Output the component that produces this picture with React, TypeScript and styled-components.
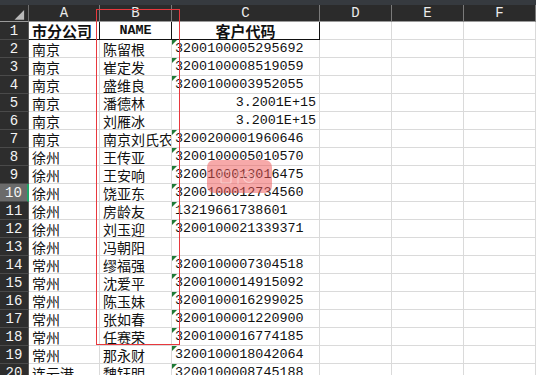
import styled, { createGlobalStyle } from 'styled-components'

const GlobalStyle = createGlobalStyle`
    html, body {
        margin: 0;
        padding: 0;
        background: #ffffff;
        overflow: hidden;
    }
`

type Row = { city: string; name: string; code: string; sci?: boolean }

const rows: Row[] = [
    { city: '南京', name: '陈留根', code: '3200100005295692' },
    { city: '南京', name: '崔定发', code: '3200100008519059' },
    { city: '南京', name: '盛维良', code: '3200100003952055' },
    { city: '南京', name: '潘德林', code: '3.2001E+15', sci: true },
    { city: '南京', name: '刘雁冰', code: '3.2001E+15', sci: true },
    { city: '南京', name: '南京刘氏农', code: '3200200001960646' },
    { city: '徐州', name: '王传亚', code: '3200100005010570' },
    { city: '徐州', name: '王安响', code: '3200100013016475' },
    { city: '徐州', name: '饶亚东', code: '3200100012734560' },
    { city: '徐州', name: '房龄友', code: '13219661738601' },
    { city: '徐州', name: '刘玉迎', code: '3200100021339371' },
    { city: '徐州', name: '冯朝阳', code: '' },
    { city: '常州', name: '缪福强', code: '3200100007304518' },
    { city: '常州', name: '沈爱平', code: '3200100014915092' },
    { city: '常州', name: '陈玉妹', code: '3200100016299025' },
    { city: '常州', name: '张如春', code: '3200100001220900' },
    { city: '常州', name: '任赛荣', code: '3200100016774185' },
    { city: '常州', name: '那永财', code: '3200100018042064' },
    { city: '连云港', name: '魏钰明', code: '3200100008745188' },
]

const letters = ['A', 'B', 'C', 'D', 'E', 'F']

const App = () => {
    return (
        <Wrapper>
            <GlobalStyle />
            <TopStrip />
            <Sheet>
                <Corner>
                    <svg width="29" height="17" viewBox="0 0 29 17">
                        <polygon points="25,5 25,15 15,15" fill="#b9b9b9" />
                    </svg>
                </Corner>
                {letters.map((l) => (
                    <ColHead key={l}>{l}</ColHead>
                ))}

                <RowHead>1</RowHead>
                <Cell $boxed $bold $big>市分公司</Cell>
                <Cell $boxed $align="center" $mono $bold>NAME</Cell>
                <Cell $boxed $align="center" $bold $big>客户代码</Cell>
                <Cell />
                <Cell />
                <Cell />

                {rows.map((r, i) => {
                    const n = i + 2
                    return [
                        <RowHead key={`h${n}`} $active={n === 10}>{n}</RowHead>,
                        <Cell key={`a${n}`}>{r.city}</Cell>,
                        <Cell key={`b${n}`}>{r.name}</Cell>,
                        <Cell
                            key={`c${n}`}
                            $mono
                            $flag={!!r.code && !r.sci}
                            $align={r.sci ? 'right' : 'left'}
                        >
                            {r.code}
                        </Cell>,
                        <Cell key={`d${n}`} />,
                        <Cell key={`e${n}`} />,
                        <Cell key={`f${n}`} />,
                    ]
                })}
            </Sheet>

            <RedFrame />
            <Blob>
                <BlobIcon width="48" height="20" viewBox="0 0 48 20">
                    <rect x="5" y="4" width="10" height="12" rx="1" fill="none" stroke="#fff" strokeWidth="1.2" />
                    <line x1="22" y1="3" x2="22" y2="17" stroke="#fff" strokeWidth="1" />
                    <circle cx="33" cy="10" r="5.5" fill="none" stroke="#fff" strokeWidth="1.2" />
                    <circle cx="33" cy="10" r="1.5" fill="#fff" />
                </BlobIcon>
            </Blob>
        </Wrapper>
    )
}

const Wrapper = styled.div`
    position: relative;
    width: 536px;
    height: 375px;
    overflow: hidden;
    background: #ffffff;
`

const TopStrip = styled.div`
    height: 5px;
    background: #363a3f;
`

const Sheet = styled.div`
    display: grid;
    grid-template-columns: 29px 71px 72px 148px 72px 72px 72px;
    grid-template-rows: 17px;
    grid-auto-rows: 18px;
`

const Corner = styled.div`
    background: #2b2b2b;
    border-right: 1px solid #6e6e6e;
    border-bottom: 1px solid #9a9a9a;
    box-sizing: border-box;
    display: flex;
    svg {
        display: block;
    }
`

const ColHead = styled.div`
    background: #2b2b2b;
    color: #ececec;
    font-family: 'Liberation Mono', monospace;
    font-size: 14px;
    line-height: 15px;
    display: flex;
    align-items: center;
    justify-content: center;
    box-sizing: border-box;
    border-right: 1px solid #7a7a7a;
    border-bottom: 1px solid #9a9a9a;
    padding-top: 1px;
`

const RowHead = styled.div<{ $active?: boolean }>`
    background: ${(p) => (p.$active ? '#6b6b6b' : '#2d2d2d')};
    color: #f4f4f4;
    font-family: 'Liberation Mono', monospace;
    font-size: 14px;
    line-height: 16px;
    display: flex;
    align-items: center;
    justify-content: center;
    box-sizing: border-box;
    border-bottom: 1px solid #4a4a4a;
    border-right: ${(p) => (p.$active ? '2px solid #21a366' : '1px solid #5a5a5a')};
    padding-top: 1px;
`

const Cell = styled.div<{
    $align?: 'left' | 'center' | 'right'
    $mono?: boolean
    $bold?: boolean
    $big?: boolean
    $boxed?: boolean
    $flag?: boolean
}>`
    position: relative;
    box-sizing: border-box;
    border-right: 1px solid ${(p) => (p.$boxed ? '#111' : '#dadada')};
    border-bottom: 1px solid ${(p) => (p.$boxed ? '#111' : '#dadada')};
    display: flex;
    align-items: center;
    justify-content: ${(p) =>
        p.$align === 'center' ? 'center' : p.$align === 'right' ? 'flex-end' : 'flex-start'};
    padding: 1px 3px 0 3px;
    overflow: hidden;
    white-space: nowrap;
    color: #111;
    font-family: ${(p) =>
        p.$mono
            ? "'Liberation Mono', 'Noto Sans CJK SC', monospace"
            : "'Noto Sans CJK SC', 'Noto Sans', sans-serif"};
    font-size: ${(p) => (p.$mono ? '13.4px' : p.$big ? '15px' : '14px')};
    font-weight: ${(p) => (p.$bold ? 700 : 400)};
    line-height: 16px;

    &::before {
        content: '';
        display: ${(p) => (p.$flag ? 'block' : 'none')};
        position: absolute;
        top: 0;
        left: 0;
        border-top: 5px solid #1e7a35;
        border-right: 5px solid transparent;
    }
`

const RedFrame = styled.div`
    position: absolute;
    left: 96px;
    top: 9px;
    width: 84px;
    height: 336px;
    border: 1px solid #e8383d;
    box-sizing: border-box;
    pointer-events: none;
`

const Blob = styled.div`
    position: absolute;
    left: 207px;
    top: 160px;
    width: 65px;
    height: 33px;
    border-radius: 7px;
    background: rgba(240, 90, 90, 0.52);
    display: flex;
    align-items: center;
    justify-content: center;
`

const BlobIcon = styled.svg`
    opacity: 0.45;
`

export default App
